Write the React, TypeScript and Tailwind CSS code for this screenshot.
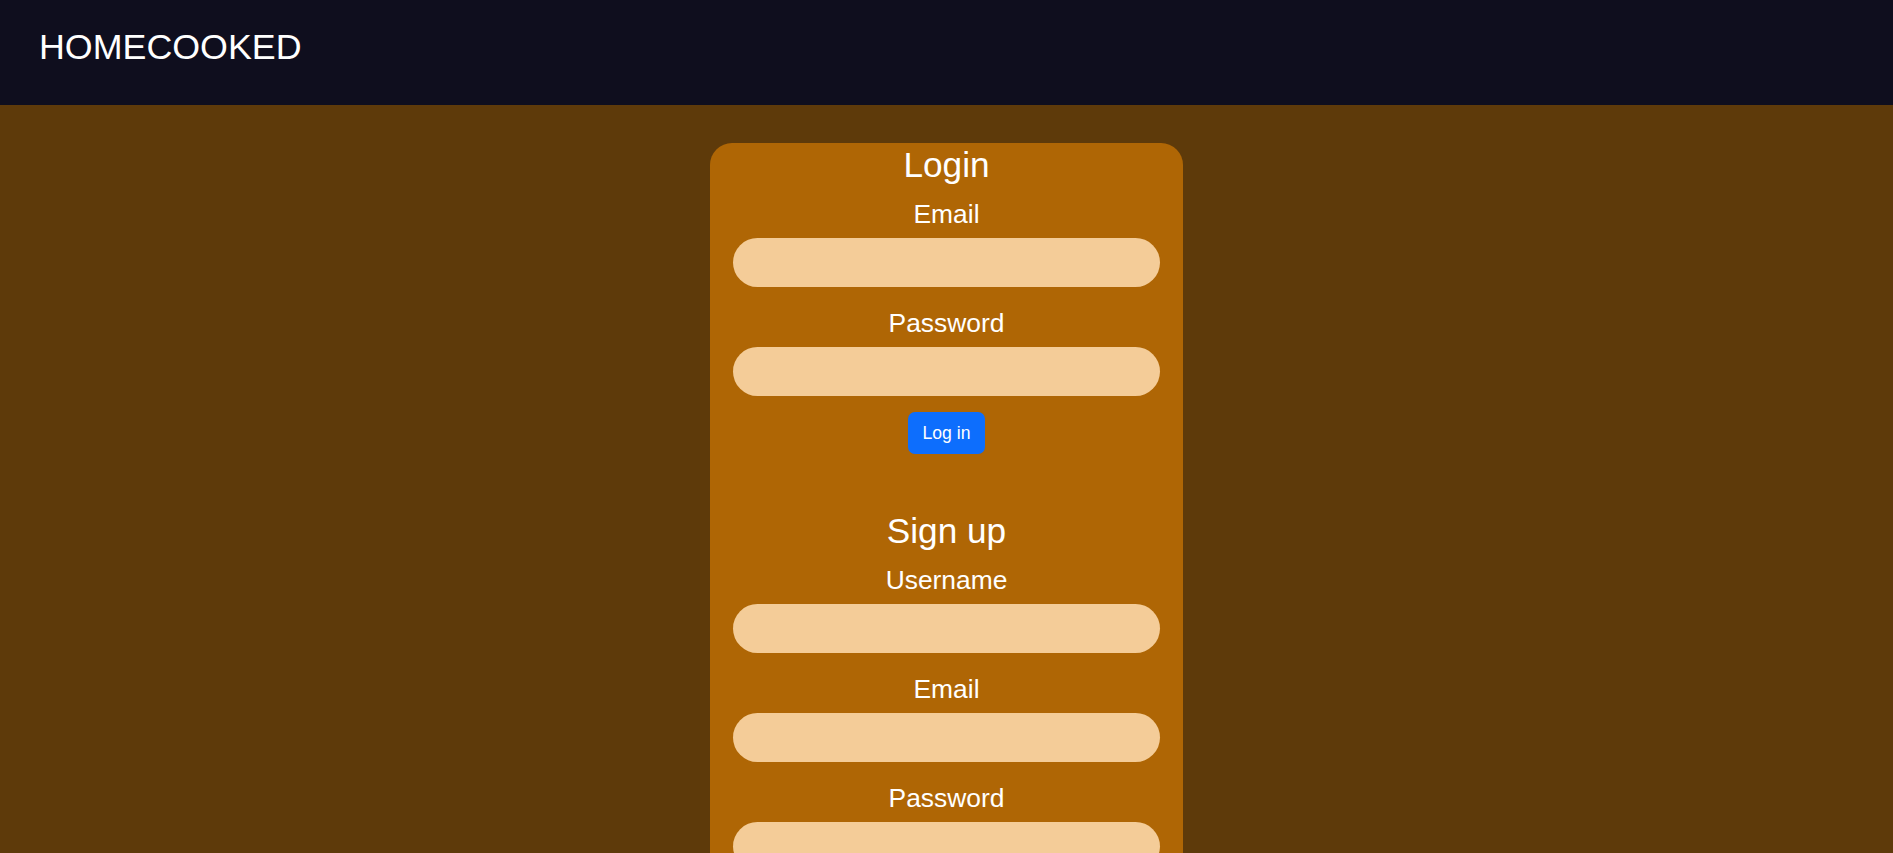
import React from "react"

type FieldProps = {
  label: string
  type?: string
}

function Field({ label, type = "text" }: FieldProps) {
  return (
    <div className="mb-[16px] flex flex-col items-center">
      <label className="mb-[4px] text-[26.4px] leading-[40px] text-white">{label}</label>
      <input
        type={type}
        className="h-[49px] w-full rounded-full bg-[#f4cc98] px-5 text-[18px] text-black outline-none"
      />
    </div>
  )
}

export default function App() {
  return (
    <div
      className="min-h-screen bg-[#5e3a0a]"
      style={{ fontFamily: '"Liberation Sans", Arial, sans-serif' }}
    >
      {/* Header */}
      <header className="h-[105px] bg-[#0f0e1e] pl-[39px] pt-[27px]">
        <h1 className="text-[35.8px] leading-[40px] text-white">HOMECOOKED</h1>
      </header>

      {/* Auth card */}
      <div className="mx-auto mt-[38px] w-1/4 rounded-[22px] bg-[#af6605] px-[23px] pb-8 pt-[1px]">
        <form onSubmit={(e) => e.preventDefault()}>
          <h2 className="mb-[8px] text-center text-[35.2px] leading-[42px] text-white">Login</h2>
          <Field label="Email" type="email" />
          <Field label="Password" type="password" />
          <div className="mt-[3px] flex justify-center">
            <button
              type="submit"
              className="h-[42px] rounded-[7px] bg-[#0d6efd] px-[15px] text-[17.6px] text-white"
            >
              Log in
            </button>
          </div>
        </form>

        <form onSubmit={(e) => e.preventDefault()} className="mt-[56px]">
          <h2 className="mb-[8px] text-center text-[35.2px] leading-[42px] text-white">Sign up</h2>
          <Field label="Username" />
          <Field label="Email" type="email" />
          <Field label="Password" type="password" />
          <div className="mt-[3px] flex justify-center">
            <button
              type="submit"
              className="h-[42px] rounded-[7px] bg-[#0d6efd] px-[15px] text-[17.6px] text-white"
            >
              Sign up
            </button>
          </div>
        </form>
      </div>
    </div>
  )
}
